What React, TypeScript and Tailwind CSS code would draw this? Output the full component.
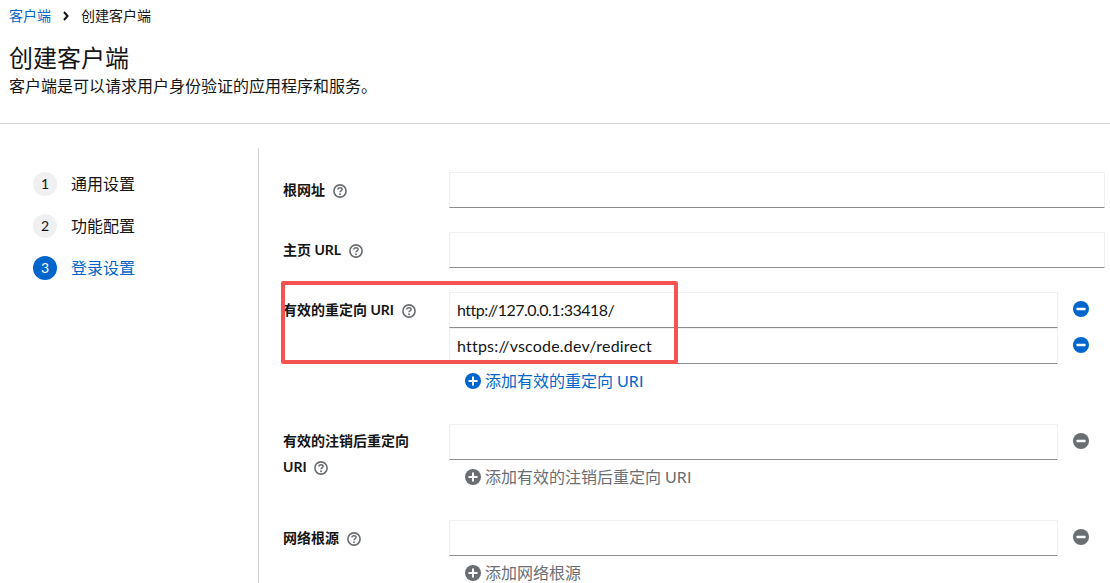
import { ReactNode } from 'react';

const font = 'Lato, "Noto Sans CJK SC", sans-serif';

function HelpIcon() {
  return (
    <svg width="14" height="14" viewBox="0 0 14 14" className="relative top-[1px] shrink-0 text-[#6a6e73]" fill="none">
      <circle cx="7" cy="7" r="6.100" stroke="currentColor" strokeWidth="1.600" />
      <path d="M4.900 5.500c0-1.100.9-1.800 2.100-1.800s2.100.7 2.100 1.700c0 1.500-2.100 1.500-2.100 2.800" stroke="currentColor" strokeWidth="1.500" />
      <circle cx="7" cy="10.300" r=".95" fill="currentColor" />
    </svg>
  );
}

function RoundIcon({ kind, color }: { kind: 'plus' | 'minus'; color: string }) {
  return (
    <svg width="16" height="16" viewBox="0 0 16 16" className="shrink-0" style={{ color }}>
      <circle cx="8" cy="8" r="8" fill="currentColor" />
      {kind === 'plus' ? (
        <path d="M7 3.500h2V7h3.500v2H9v3.500H7V9H3.500V7H7z" fill="#fff" />
      ) : (
        <rect x="3.500" y="6.700" width="9" height="2.600" rx=".5" fill="#fff" />
      )}
    </svg>
  );
}

function Step({ n, label, active }: { n: number; label: string; active?: boolean }) {
  return (
    <div className="flex h-6 items-center gap-[14px]">
      <span
        className={
          active
            ? 'flex size-6 items-center justify-center rounded-full bg-[#06c] text-sm text-white'
            : 'flex size-6 items-center justify-center rounded-full bg-[#f0f0f0] text-sm text-[#151515]'
        }
      >
        {n}
      </span>
      <span className={active ? 'text-base text-[#06c]' : 'text-base text-[#151515]'}>{label}</span>
    </div>
  );
}

function Label({ children }: { children: ReactNode }) {
  return <div className="w-[166px] shrink-0 text-sm leading-[26px] font-bold text-[#151515]">{children}</div>;
}

function TextInput({ value = '', tracking = '' }: { value?: string; tracking?: string }) {
  return (
    <div className={`flex h-9 flex-1 items-center border border-[#f0f0f0] border-b-[#8a8d90] pr-2 pl-[7px] text-base text-[#151515] ${tracking}`}>
      {value}
    </div>
  );
}

function AddLink({ label, color }: { label: string; color: string }) {
  return (
    <div className="mt-[5px] flex h-6 items-center gap-[4px] pl-4 text-base" style={{ color }}>
      <RoundIcon kind="plus" color={color} />
      {label}
    </div>
  );
}

function MultiRow({ value, color, tracking }: { value?: string; color: string; tracking?: string }) {
  return (
    <div className="flex items-center">
      <TextInput value={value} tracking={tracking} />
      <div className="flex w-[47px] justify-end">
        <span className="relative top-[-1px] mr-[16px]">
          <RoundIcon kind="minus" color={color} />
        </span>
      </div>
    </div>
  );
}

export default function App() {
  return (
    <div className="relative h-[583px] w-[1110px] overflow-hidden bg-white" style={{ fontFamily: font }}>
      <div className="h-[124px] border-b border-[#d2d2d2] px-[9px]">
        <nav className="flex h-8 items-center text-sm text-[#151515]">
          <span className="text-[#06c]">客户端</span>
          <svg width="8" height="10" viewBox="0 0 8 10" className="mx-[11px]" fill="none">
            <path d="M2 1l3.500 4L2 9" stroke="#151515" strokeWidth="2" />
          </svg>
          <span>创建客户端</span>
        </nav>
        <h1 className="mt-[11px] text-2xl leading-[30px] text-[#151515]">创建客户端</h1>
        <p className="text-base leading-[26px] text-[#151515]">客户端是可以请求用户身份验证的应用程序和服务。</p>
      </div>

      <div className="flex h-[459px] pt-6">
        <aside className="flex h-[435px] w-[259px] shrink-0 flex-col gap-[18px] border-r border-[#d2d2d2] pt-6 pl-[33px]">
          <Step n={1} label="通用设置" />
          <Step n={2} label="功能配置" />
          <Step n={3} label="登录设置" active />
        </aside>

        <main className="flex flex-1 flex-col gap-6 pt-6 pr-[5px] pl-6">
          <div className="flex">
            <Label>
              <span className="flex h-9 items-center gap-2">根网址 <HelpIcon /></span>
            </Label>
            <TextInput />
          </div>
          <div className="flex">
            <Label>
              <span className="flex h-9 items-center gap-2">主页 URL <HelpIcon /></span>
            </Label>
            <TextInput />
          </div>
          <div className="flex">
            <Label>
              <span className="flex h-9 items-center gap-2">有效的重定向 URI <HelpIcon /></span>
            </Label>
            <div className="flex-1">
              <MultiRow value="http://127.0.0.1:33418/" color="#06c" tracking="tracking-[-0.5px]" />
              <MultiRow value="https://vscode.dev/redirect" color="#06c" tracking="tracking-[0.2px]" />
              <AddLink label="添加有效的重定向 URI" color="#06c" />
            </div>
          </div>
          <div className="mt-[7px] flex">
            <Label>
              <div className="pt-1">有效的注销后重定向</div>
              <span className="flex items-center gap-[7px]">URI <HelpIcon /></span>
            </Label>
            <div className="flex-1">
              <MultiRow color="#6a6e73" />
              <AddLink label="添加有效的注销后重定向 URI" color="#6a6e73" />
            </div>
          </div>
          <div className="mt-[7px] flex">
            <Label>
              <span className="flex h-9 items-center gap-2">网络根源 <HelpIcon /></span>
            </Label>
            <div className="flex-1">
              <MultiRow color="#6a6e73" />
              <AddLink label="添加网络根源" color="#6a6e73" />
            </div>
          </div>
        </main>
      </div>

      <div className="absolute top-[281px] left-[281px] h-[83px] w-[397px] rounded-[2px] border-4 border-[#f55252]" />
    </div>
  );
}
